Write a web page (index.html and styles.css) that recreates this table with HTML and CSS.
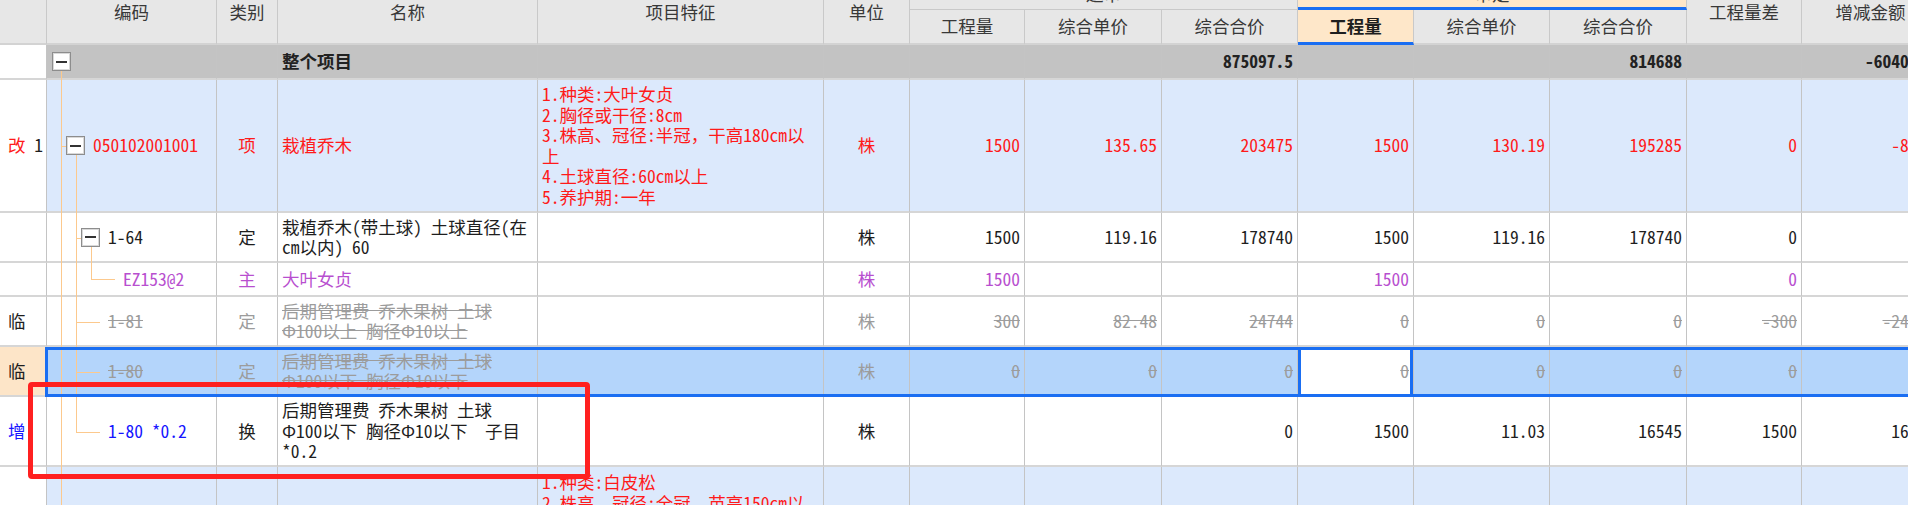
FILE: index.html
```html
<!DOCTYPE html>
<html lang="zh-CN">
<head>
<meta charset="utf-8">
<title>分部分项工程</title>
<link rel="stylesheet" href="styles.css">
</head>
<body>
<div class="sheet">
  <div class="head">
    <div class="hc"></div>
    <div class="hc">编码</div>
    <div class="hc">类别</div>
    <div class="hc">名称</div>
    <div class="hc">项目特征</div>
    <div class="hc">单位</div>
    <div class="grp"><span>送审</span></div>
    <div class="grp grp-sel"><span>审定</span></div>
    <div class="hc">工程量差</div>
    <div class="hc">增减金额</div>
    <div class="sub">工程量</div>
    <div class="sub">综合单价</div>
    <div class="sub">综合合价</div>
    <div class="sub sub-sel">工程量</div>
    <div class="sub">综合单价</div>
    <div class="sub">综合合价</div>
  </div>

  <div class="row row-total r35">
    <div class="c c-no"></div>
    <div class="c lv0"><span class="fold"></span></div>
    <div class="c"></div>
    <div class="c">整个项目</div>
    <div class="c"></div>
    <div class="c"></div>
    <div class="c num"></div>
    <div class="c num"></div>
    <div class="c num">875097.5</div>
    <div class="c num"></div>
    <div class="c num"></div>
    <div class="c num">814688</div>
    <div class="c num"></div>
    <div class="c num">-60409.5</div>
  </div>

  <div class="row row-blue t-red r133">
    <div class="c c-no"><span class="t-red">改</span>&nbsp;<span class="t-ink">1</span></div>
    <div class="c lv1"><span class="fold"></span>050102001001</div>
    <div class="c ctr">项</div>
    <div class="c">栽植乔木</div>
    <div class="c">1.种类:大叶女贞<br>2.胸径或干径:8cm<br>3.株高、冠径:半冠，干高180cm以<br>上<br>4.土球直径:60cm以上<br>5.养护期:一年</div>
    <div class="c ctr">株</div>
    <div class="c num">1500</div>
    <div class="c num">135.65</div>
    <div class="c num">203475</div>
    <div class="c num">1500</div>
    <div class="c num">130.19</div>
    <div class="c num">195285</div>
    <div class="c num">0</div>
    <div class="c num">-8190</div>
  </div>

  <div class="row r50">
    <div class="c c-no"></div>
    <div class="c lv2"><span class="fold"></span>1-64</div>
    <div class="c ctr">定</div>
    <div class="c">栽植乔木(带土球) 土球直径(在<br>cm以内) 60</div>
    <div class="c"></div>
    <div class="c ctr">株</div>
    <div class="c num">1500</div>
    <div class="c num">119.16</div>
    <div class="c num">178740</div>
    <div class="c num">1500</div>
    <div class="c num">119.16</div>
    <div class="c num">178740</div>
    <div class="c num">0</div>
    <div class="c num"></div>
  </div>

  <div class="row t-purple r34">
    <div class="c c-no"></div>
    <div class="c leaf3">EZ153@2</div>
    <div class="c ctr">主</div>
    <div class="c">大叶女贞</div>
    <div class="c"></div>
    <div class="c ctr">株</div>
    <div class="c num">1500</div>
    <div class="c num"></div>
    <div class="c num"></div>
    <div class="c num">1500</div>
    <div class="c num"></div>
    <div class="c num"></div>
    <div class="c num">0</div>
    <div class="c num"></div>
  </div>

  <div class="row r50">
    <div class="c c-no">临</div>
    <div class="c leaf2 del">1-81</div>
    <div class="c ctr t-gray">定</div>
    <div class="c del">后期管理费 乔木果树 土球<br>Φ100以上 胸径Φ10以上</div>
    <div class="c"></div>
    <div class="c ctr t-gray">株</div>
    <div class="c num del">300</div>
    <div class="c num del">82.48</div>
    <div class="c num del">24744</div>
    <div class="c num del">0</div>
    <div class="c num del">0</div>
    <div class="c num del">0</div>
    <div class="c num del">-300</div>
    <div class="c num del">-24744</div>
  </div>

  <div class="row row-sel r50">
    <div class="c c-no">临</div>
    <div class="c leaf2 del">1-80</div>
    <div class="c ctr t-gray">定</div>
    <div class="c del">后期管理费 乔木果树 土球<br>Φ100以下 胸径Φ10以下</div>
    <div class="c"></div>
    <div class="c ctr t-gray">株</div>
    <div class="c num del">0</div>
    <div class="c num del">0</div>
    <div class="c num del">0</div>
    <div class="c num del active">0</div>
    <div class="c num del">0</div>
    <div class="c num del">0</div>
    <div class="c num del">0</div>
    <div class="c num"></div>
    <div class="sel-frame"></div>
  </div>

  <div class="row r70">
    <div class="c c-no t-blue">增</div>
    <div class="c leaf2 t-blue">1-80 *0.2</div>
    <div class="c ctr">换</div>
    <div class="c">后期管理费 乔木果树 土球<br>Φ100以下 胸径Φ10以下&nbsp;&nbsp;子目<br>*0.2</div>
    <div class="c"></div>
    <div class="c ctr">株</div>
    <div class="c num"></div>
    <div class="c num"></div>
    <div class="c num">0</div>
    <div class="c num">1500</div>
    <div class="c num">11.03</div>
    <div class="c num">16545</div>
    <div class="c num">1500</div>
    <div class="c num">16545</div>
  </div>

  <div class="row row-blue row-top t-red r133">
    <div class="c c-no"></div>
    <div class="c"></div>
    <div class="c"></div>
    <div class="c"></div>
    <div class="c">1.种类:白皮松<br>2.株高、冠径:全冠，苗高150cm以</div>
    <div class="c"></div>
    <div class="c num"></div>
    <div class="c num"></div>
    <div class="c num"></div>
    <div class="c num"></div>
    <div class="c num"></div>
    <div class="c num"></div>
    <div class="c num"></div>
    <div class="c num"></div>
  </div>

  <svg class="tree" width="140" height="505" viewBox="0 0 140 505" aria-hidden="true">
    <path d="M61.5 71V505 M61 146.5H66 M76.5 155V432.5 M76 238.5H81 M91.5 247V279.5 M91 279.5H115 M76 322.5H100 M76 372.5H100 M76 432.5H100" fill="none" stroke="#fcc98d" stroke-width="1"/>
  </svg>

  <div class="mark"></div>
</div>
</body>
</html>
```

FILE: styles.css
```css
* {
  box-sizing: border-box;
}

html,
body {
  margin: 0;
  padding: 0;
  overflow: hidden;
  background: #ffffff;
}

body {
  width: 1908px;
  height: 505px;
}

.sheet {
  position: relative;
  width: 1940px;
  font-family: "Noto Sans Mono CJK SC", "Noto Sans CJK SC", "DejaVu Sans", sans-serif;
  font-size: 17.5px;
  line-height: 20.5px;
  color: #1e1e1e;
}

.head,
.row {
  display: grid;
  grid-template-columns: 47px 170px 61px 260px 286px 86px 115px 137px 136px 116px 136px 137px 115px 138px;
}

/* ---------- header ---------- */
.head {
  grid-template-rows: 10px 35px;
  background: #e7e7e7;
  color: #383838;
}

.hc {
  grid-row: span 2;
  display: flex;
  justify-content: center;
  align-items: flex-start;
  padding-top: 2px;
  border-right: 1px solid #c9c9c9;
  border-bottom: 2px solid #d3d3d3;
}

.grp {
  grid-column: span 3;
  display: flex;
  justify-content: center;
  align-items: flex-start;
  overflow: hidden;
  border-right: 1px solid #c9c9c9;
  border-bottom: 1px solid #c9c9c9;
}

.grp span {
  margin-top: -16px;
}

.grp-sel {
  background: #fee7c9;
  border-bottom: 3px solid #1a6ef2;
}

.sub {
  display: flex;
  justify-content: center;
  align-items: center;
  border-right: 1px solid #c9c9c9;
  border-bottom: 2px solid #d3d3d3;
}

.sub-sel {
  background: #fee7c9;
  color: #1e1e1e;
  font-weight: 700;
  border-bottom: 3px solid #1a6ef2;
}

/* ---------- rows ---------- */
.r34 { height: 34px; }
.r35 { height: 35px; }
.r50 { height: 50px; }
.r70 { height: 70px; }
.r133 { height: 133px; }

.c {
  display: flex;
  align-items: center;
  padding: 0 4px;
  border-right: 1px solid #c4c4c4;
  border-bottom: 2px solid #d6d6d6;
  overflow: hidden;
  white-space: nowrap;
}

.num {
  justify-content: flex-end;
}

.ctr {
  justify-content: center;
}

.c-no {
  background: #ffffff;
  padding-left: 8px;
  color: #1e1e1e;
}

.row-total .c {
  background: #c3c3c3;
  font-weight: 700;
  color: #222222;
}

.row-blue .c {
  background: #dce9fc;
}

.row-total .c-no,
.row-blue .c-no {
  background: #ffffff;
}

.row-top .c {
  align-items: flex-start;
  padding-top: 5px;
}

.row-sel {
  position: relative;
}

.row-sel .c {
  background: #b4d5fb;
}

.row-sel .c-no {
  background: #fde5c8;
}

.row-sel .active {
  background: #ffffff;
  box-shadow: inset 3px 0 0 #1a6ef2, inset -3px 0 0 #1a6ef2;
}

.sel-frame {
  position: absolute;
  left: 45px;
  right: 0;
  top: 0;
  bottom: 0;
  border: 3px solid #1a6ef2;
  border-right: none;
  pointer-events: none;
  z-index: 2;
}

/* ---------- tree ---------- */
.lv0 { padding-left: 5px; }
.lv1 { padding-left: 19px; }
.lv2 { padding-left: 34px; }
.leaf2 { padding-left: 61px; }
.leaf3 { padding-left: 76px; }

.fold {
  flex: none;
  width: 19px;
  height: 19px;
  margin-right: 8px;
  border: 1px solid #8d8d8d;
  box-shadow: inset 0 0 0 1px #d9d9d9;
  background: #ffffff;
  display: flex;
  align-items: center;
  justify-content: center;
}

.fold::before {
  content: "";
  width: 11px;
  height: 2px;
  background: #333333;
}

.tree {
  position: absolute;
  left: 0;
  top: 0;
  pointer-events: none;
  z-index: 1;
}

/* ---------- text colours ---------- */
.t-red { color: #ff1a1a; }
.t-ink { color: #1e1e1e; }
.t-purple { color: #b84fcf; }
.t-blue { color: #1616ff; }
.t-gray { color: #9c9c9c; }

.del {
  color: #9c9c9c;
  text-decoration: line-through;
}

/* ---------- annotation ---------- */
.mark {
  position: absolute;
  left: 28px;
  top: 382px;
  width: 562px;
  height: 97px;
  border: 5px solid #ff2020;
  border-radius: 4px;
  pointer-events: none;
  z-index: 3;
}
```
